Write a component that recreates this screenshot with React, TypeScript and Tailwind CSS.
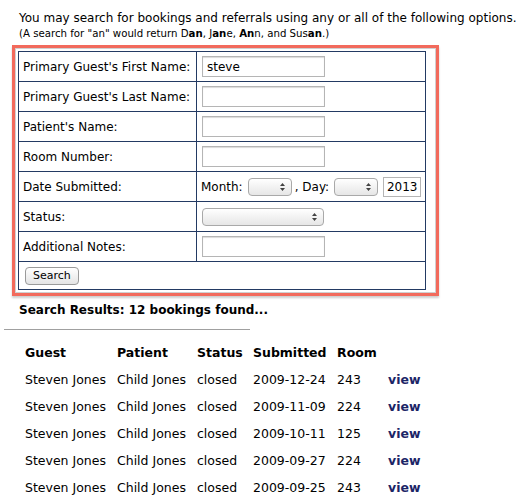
const rows = [
  { date: "2009-12-24", room: "243" },
  { date: "2009-11-09", room: "224" },
  { date: "2009-10-11", room: "125" },
  { date: "2009-09-27", room: "224" },
  { date: "2009-09-25", room: "243" },
];

function TextBox({ value = "", w = "w-[123px]" }: { value?: string; w?: string }) {
  return (
    <input
      readOnly
      value={value}
      className={`${w} h-[21px] align-middle border border-[#b5b5b5] shadow-[inset_0_1px_1px_rgba(0,0,0,0.15)] bg-white px-[4px] text-[12px] text-black outline-none`}
    />
  );
}

function Select({ w }: { w: string }) {
  return (
    <div
      className={`${w} h-[18px] rounded-[4px] border border-[#a9a9a9] bg-gradient-to-b from-white to-[#e6e6e6] flex items-center justify-end pr-[6px]`}
    >
      <svg width="5" height="8" viewBox="0 0 5 8">
        <path d="M0 3 L2.5 0 L5 3 Z M0 5 L2.5 8 L5 5 Z" fill="#444" />
      </svg>
    </div>
  );
}

export default function App() {
  const labels = [
    "Primary Guest's First Name:",
    "Primary Guest's Last Name:",
    "Patient's Name:",
    "Room Number:",
  ];

  return (
    <div className="w-[530px] h-[503px] bg-white text-black overflow-hidden whitespace-nowrap font-['Verdana','DejaVu_Sans',sans-serif]">
      <div className="pl-[19px] pt-[11px]">
        <p className="text-[12px] leading-[15px]">
          You may search for bookings and referrals using any or all of the following options.
        </p>
        <p className="text-[10.2px] leading-[13px] mt-[1px]">
          (A search for "an" would return D<b>an</b>, J<b>an</b>e, <b>An</b>n, and Sus<b>an</b>.)
        </p>
      </div>

      <div className="ml-[12px] mt-[5px] w-[427px] border-[3px] border-[#f26a5c] shadow-[0_2px_2px_rgba(0,0,0,0.2)]">
        <div className="border border-[#d0d0d0] p-[2px] bg-white">
          <table className="w-[408px] border-collapse border border-[#233a63] text-[12px]">
            <tbody>
              {labels.map((l, i) => (
                <tr key={l} className="h-[30px]">
                  <td className="w-[178px] border border-[#233a63] pl-[4px] py-0">{l}</td>
                  <td className="border border-[#233a63] pl-[5px] py-0">
                    <TextBox value={i === 0 ? "steve" : ""} />
                  </td>
                </tr>
              ))}
              <tr className="h-[30px]">
                <td className="border border-[#233a63] pl-[4px] py-0">Date Submitted:</td>
                <td className="border border-[#233a63] pl-[4px] py-0">
                  <div className="flex items-center">
                    <span>Month:</span>
                    <span className="ml-[5px]"><Select w="w-[44px]" /></span>
                    <span className="ml-[3px]">, Day:</span>
                    <span className="ml-[5px]"><Select w="w-[44px]" /></span>
                    <input
                      readOnly
                      value="2013"
                      className="ml-[5px] w-[38px] h-[20px] border border-[#b5b5b5] text-[12px] text-center outline-none"
                    />
                  </div>
                </td>
              </tr>
              <tr className="h-[30px]">
                <td className="border border-[#233a63] pl-[4px] py-0">Status:</td>
                <td className="border border-[#233a63] pl-[5px] py-0">
                  <Select w="w-[122px]" />
                </td>
              </tr>
              <tr className="h-[30px]">
                <td className="border border-[#233a63] pl-[4px] py-0">Additional Notes:</td>
                <td className="border border-[#233a63] pl-[5px] py-0">
                  <TextBox />
                </td>
              </tr>
              <tr className="h-[28px]">
                <td colSpan={2} className="border border-[#233a63] pl-[6px] py-0">
                  <button className="h-[18px] px-[7px] rounded-[4px] border border-[#9a9a9a] bg-gradient-to-b from-white to-[#e4e4e4] text-[11px] leading-[16px]">
                    Search
                  </button>
                </td>
              </tr>
            </tbody>
          </table>
        </div>
      </div>

      <p className="ml-[19px] mt-[7px] text-[12px] font-bold leading-[15px]">
        Search Results: 12 bookings found...
      </p>
      <div className="ml-[4px] mt-[11px] w-[246px] h-[1px] bg-[#a0a0a0]" />

      <table className="ml-[25px] mt-[14px] text-[12.5px] border-collapse">
        <thead>
          <tr className="h-[19px] text-left">
            <th className="w-[92px] p-0 font-bold">Guest</th>
            <th className="w-[80px] p-0 font-bold">Patient</th>
            <th className="w-[56px] p-0 font-bold">Status</th>
            <th className="w-[84px] p-0 font-bold">Submitted</th>
            <th className="w-[51px] p-0 font-bold">Room</th>
            <th className="p-0"></th>
          </tr>
        </thead>
        <tbody>
          {rows.map((r) => (
            <tr key={r.date} className="h-[27px]">
              <td className="p-0 pt-[8px]">Steven Jones</td>
              <td className="p-0 pt-[8px]">Child Jones</td>
              <td className="p-0 pt-[8px]">closed</td>
              <td className="p-0 pt-[8px]">{r.date}</td>
              <td className="p-0 pt-[8px]">{r.room}</td>
              <td className="p-0 pt-[8px]">
                <a className="font-bold text-[#1c2566]">view</a>
              </td>
            </tr>
          ))}
        </tbody>
      </table>
    </div>
  );
}
